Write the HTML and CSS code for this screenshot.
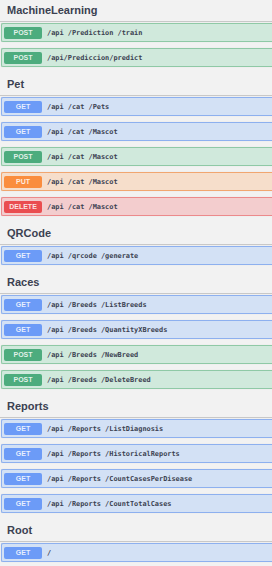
FILE: index.html
```html
<!DOCTYPE html>
<html>
<head>
<meta charset="utf-8">
<link rel="stylesheet" href="styles.css">
</head>
<body>
<div class="page">
  <section class="tag first">
    <h2 class="tag-title">MachineLearning</h2>
    <div class="op post"><span class="method">POST</span><span class="path">/api /Prediction /train</span></div>
    <div class="op post"><span class="method">POST</span><span class="path">/api/Prediccion/predict</span></div>
  </section>
  <section class="tag">
    <h2 class="tag-title">Pet</h2>
    <div class="op get"><span class="method">GET</span><span class="path">/api /cat /Pets</span></div>
    <div class="op get"><span class="method">GET</span><span class="path">/api /cat /Mascot</span></div>
    <div class="op post"><span class="method">POST</span><span class="path">/api /cat /Mascot</span></div>
    <div class="op put"><span class="method">PUT</span><span class="path">/api /cat /Mascot</span></div>
    <div class="op delete"><span class="method">DELETE</span><span class="path">/api /cat /Mascot</span></div>
  </section>
  <section class="tag">
    <h2 class="tag-title">QRCode</h2>
    <div class="op get"><span class="method">GET</span><span class="path">/api /qrcode /generate</span></div>
  </section>
  <section class="tag">
    <h2 class="tag-title">Races</h2>
    <div class="op get"><span class="method">GET</span><span class="path">/api /Breeds /ListBreeds</span></div>
    <div class="op get"><span class="method">GET</span><span class="path">/api /Breeds /QuantityXBreeds</span></div>
    <div class="op post"><span class="method">POST</span><span class="path">/api /Breeds /NewBreed</span></div>
    <div class="op post"><span class="method">POST</span><span class="path">/api /Breeds /DeleteBreed</span></div>
  </section>
  <section class="tag">
    <h2 class="tag-title">Reports</h2>
    <div class="op get"><span class="method">GET</span><span class="path">/api /Reports /ListDiagnosis</span></div>
    <div class="op get"><span class="method">GET</span><span class="path">/api /Reports /HistoricalReports</span></div>
    <div class="op get"><span class="method">GET</span><span class="path">/api /Reports /CountCasesPerDisease</span></div>
    <div class="op get"><span class="method">GET</span><span class="path">/api /Reports /CountTotalCases</span></div>
  </section>
  <section class="tag">
    <h2 class="tag-title">Root</h2>
    <div class="op get"><span class="method">GET</span><span class="path">/</span></div>
  </section>
</div>
</body>
</html>
```
FILE: styles.css
```css
html, body {
  margin: 0;
  padding: 0;
  background: #f2f2f2;
}
.page {
  padding-left: 1px;
}
.tag.first {
  margin-top: -1px;
}
.tag-title {
  margin: 0 0 1px -1px;
  height: 23px;
  box-sizing: border-box;
  display: flex;
  align-items: flex-end;
  padding: 0 0 4px 7px;
  font-family: "Liberation Sans", Arial, sans-serif;
  font-weight: 700;
  font-size: 11px;
  line-height: 14px;
  color: #3b4151;
  border-bottom: 1px solid #c8c8c8;
}
.op {
  display: flex;
  align-items: center;
  height: 19px;
  box-sizing: border-box;
  margin-bottom: 6px;
  padding-left: 2px;
  border: 1px solid;
  border-right: none;
  border-radius: 2px 0 0 2px;
  box-shadow: 0 0 1px rgba(0,0,0,0.15);
}
.method {
  flex: none;
  width: 38px;
  height: 12px;
  border-radius: 2px;
  display: flex;
  align-items: center;
  justify-content: center;
  font-family: "Liberation Sans", Arial, sans-serif;
  font-weight: 700;
  font-size: 7px;
  color: rgba(255,255,255,0.85);
}
.path {
  margin-left: 5px;
  font-family: "DejaVu Sans Mono", "Liberation Mono", monospace;
  font-weight: 700;
  font-size: 6.9px;
  color: #3b4151;
  white-space: nowrap;
}
.post { background: #d0e9dc; border-color: #8fc9a6; }
.post .method { background: #4dac7e; }
.get { background: #d3e1f5; border-color: #8db0ef; }
.get .method { background: #6c9bf7; }
.put { background: #f6decb; border-color: #f1a670; }
.put .method { background: #fa8d3e; }
.delete { background: #f3cdce; border-color: #ec8a8c; }
.delete .method { background: #ea4d50; }
```
